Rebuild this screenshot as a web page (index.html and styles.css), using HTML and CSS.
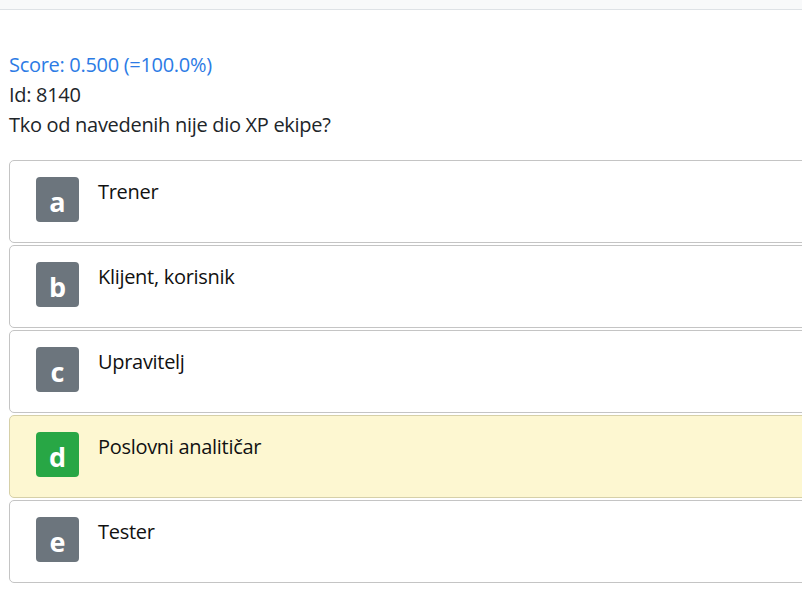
FILE: index.html
```html
<!DOCTYPE html>
<html>
<head>
<meta charset="utf-8">
<link rel="stylesheet" href="styles.css">
</head>
<body>
<div class="topbar"></div>
<main class="content">
  <div class="meta">
    <div class="score">Score: 0.500 (=100.0%)</div>
    <div>Id: 8140</div>
    <div>Tko od navedenih nije dio XP ekipe?</div>
  </div>
  <div class="answers">
    <div class="answer"><span class="badge">a</span><span class="label">Trener</span></div>
    <div class="answer"><span class="badge">b</span><span class="label">Klijent, korisnik</span></div>
    <div class="answer"><span class="badge">c</span><span class="label">Upravitelj</span></div>
    <div class="answer correct"><span class="badge">d</span><span class="label">Poslovni analitičar</span></div>
    <div class="answer"><span class="badge">e</span><span class="label">Tester</span></div>
  </div>
</main>
</body>
</html>
```
FILE: styles.css
```css
html, body {
  margin: 0;
  padding: 0;
  background: #fff;
  overflow: hidden;
}
body {
  font-family: "Open Sans", "Noto Sans", sans-serif;
  font-size: 20px;
  line-height: 30px;
  letter-spacing: -0.3px;
  color: #212529;
  width: 802px;
  height: 607px;
}
.topbar {
  height: 9px;
  background: #f8f9fa;
  border-bottom: 1px solid #dee2e6;
}
.content {
  padding: 40px 0 0 9px;
}
.score {
  color: #2c7be5;
}
.answers {
  margin-top: 20px;
  width: 820px;
  display: flex;
  flex-direction: column;
  gap: 2px;
}
.answer {
  box-sizing: border-box;
  height: 83px;
  border: 1px solid #c4c4c4;
  border-radius: 5px;
  padding: 16px 26px;
  display: flex;
  align-items: flex-start;
  gap: 19px;
  background: #fff;
}
.answer.correct {
  background: #fdf7d1;
  border-color: #d6d0a8;
}
.badge {
  width: 43px;
  height: 45px;
  border-radius: 4px;
  background: #6c757d;
  color: #fff;
  font-weight: 700;
  font-size: 27px;
  line-height: 50px;
  letter-spacing: 0;
  text-align: center;
  flex: none;
  overflow: hidden;
}
.correct .badge {
  background: #28a745;
}
.label {
  line-height: 30px;
  color: #111;
}
```
